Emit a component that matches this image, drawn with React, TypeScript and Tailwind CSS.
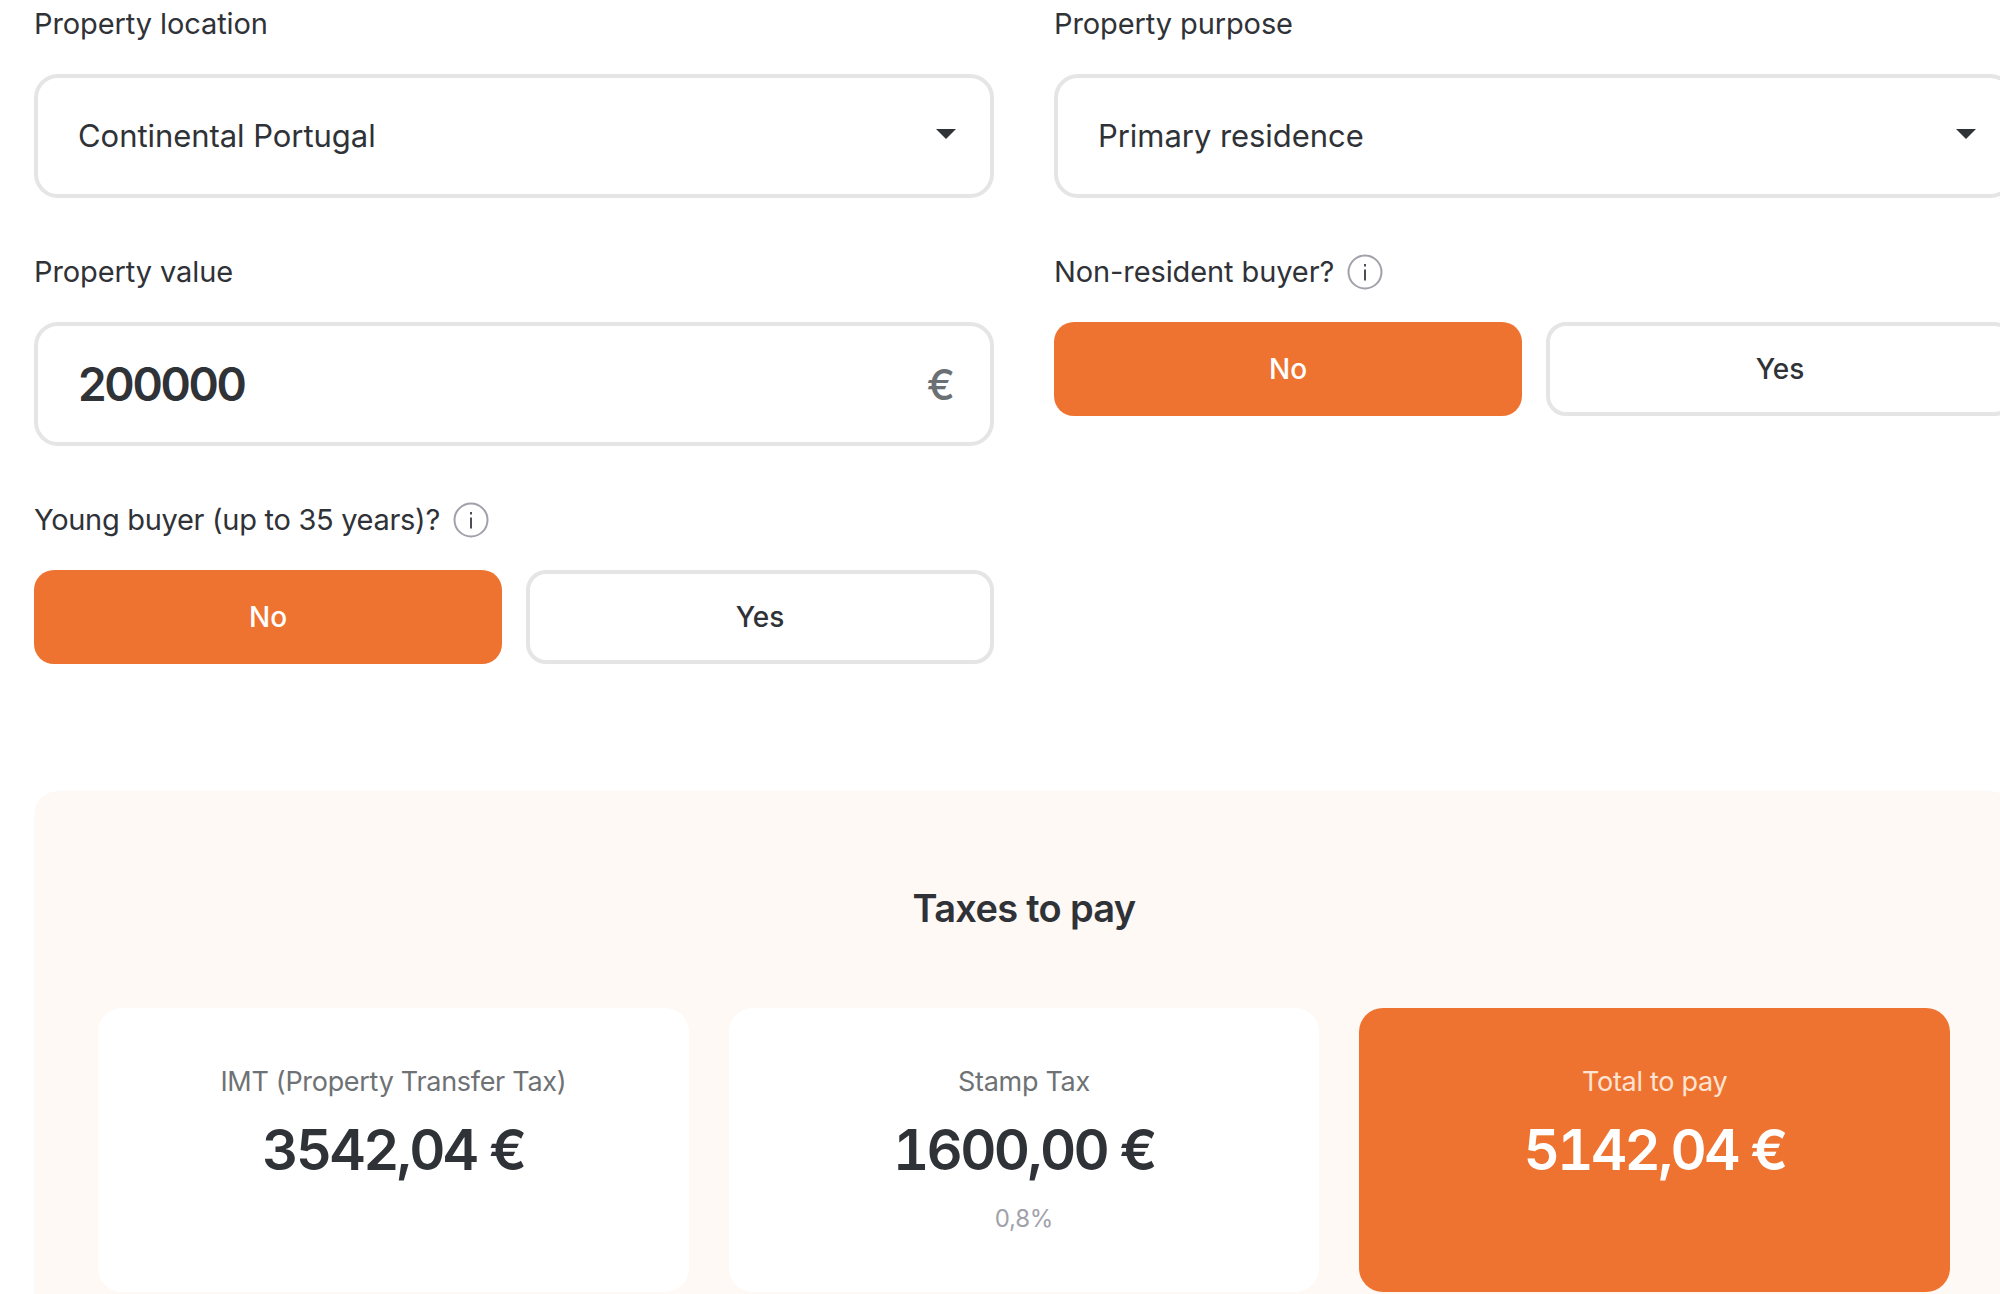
import { ReactNode } from 'react';

const font = { fontFamily: 'Inter, "Liberation Sans", sans-serif' };

function InfoIcon() {
  return (
    <svg width="36" height="36" viewBox="0 0 36 36" fill="none" className="shrink-0">
      <circle cx="18" cy="18" r="16.5" stroke="#a1a1aa" strokeWidth="2" />
      <rect x="17" y="15.5" width="2" height="11" fill="#4b4f55" />
      <rect x="17" y="10" width="2" height="2.5" fill="#4b4f55" />
    </svg>
  );
}

function Label({ children, info, tight }: { children: ReactNode; info?: boolean; tight?: boolean }) {
  return (
    <div className="h-[74px] flex items-start">
      <div className={`h-12 flex items-center gap-[13px] text-[29px] text-[#2f3237] ${tight ? 'tracking-[-0.3px]' : 'tracking-[-0.1px]'}`}>
        <span>{children}</span>
        {info && <InfoIcon />}
      </div>
    </div>
  );
}

function Select({ value }: { value: string }) {
  return (
    <div className="h-[124px] rounded-3xl border-4 border-[#e5e5e5] bg-white flex items-center justify-between pl-10 pr-[34px]">
      <span className="text-[31px] tracking-[-0.05px] text-[#2f3237]">{value}</span>
      <svg width="20" height="10" viewBox="0 0 20 10" className="mb-[4px]">
        <path d="M0 0H20L10 10Z" fill="#2f3237" />
      </svg>
    </div>
  );
}

function Toggle() {
  return (
    <div className="grid grid-cols-2 gap-[24px]">
      <button className="h-[94px] rounded-[20px] bg-[#ef7330] text-white text-[28px] font-medium">No</button>
      <button className="h-[94px] rounded-[20px] border-4 border-[#e5e5e5] bg-white text-[#2f3237] text-[28px] font-medium">Yes</button>
    </div>
  );
}

function Card({ title, amount, note, accent }: { title: string; amount: string; note?: string; accent?: boolean }) {
  return (
    <div className={`h-[284px] rounded-3xl flex flex-col items-center pt-[54px] ${accent ? 'bg-[#ef7330]' : 'bg-white'}`}>
      <div className={`h-10 flex items-center text-[27px] tracking-[-0.3px] ${accent ? 'text-[#ffe3d3]' : 'text-[#6f7275]'}`}>{title}</div>
      <div className={`mt-[13px] h-[70px] flex items-center text-[56px] font-semibold tabular-nums tracking-[-2.6px] ${accent ? 'text-white' : 'text-[#2f3237]'}`}>{amount}</div>
      {note && <div className="mt-[16px] h-9 flex items-center text-[24px] tracking-[-0.2px] text-[#a1a1aa]">{note}</div>}
    </div>
  );
}

export default function App() {
  return (
    <div className="w-[2000px] h-[1294px] overflow-hidden bg-white" style={font}>
      <div className="w-[1980px] ml-[34px]">
        <div className="grid grid-cols-[960px_960px] gap-x-[60px] gap-y-[50px]">
          <div>
            <Label>Property location</Label>
            <Select value="Continental Portugal" />
          </div>
          <div>
            <Label>Property purpose</Label>
            <Select value="Primary residence" />
          </div>
          <div>
            <Label>Property value</Label>
            <div className="h-[124px] rounded-3xl border-4 border-[#e5e5e5] bg-white flex items-center justify-between pl-10 pr-[35px]">
              <span className="text-[46px] font-semibold tracking-[-2.3px] text-[#2f3237]">200000</span>
              <span className="text-[42px] font-medium text-[#6b7075]">€</span>
            </div>
          </div>
          <div>
            <Label info>Non-resident buyer?</Label>
            <Toggle />
          </div>
          <div>
            <Label info tight>Young buyer (up to 35 years)?</Label>
            <Toggle />
          </div>
        </div>

        {/* Results */}
        <div className="mt-[127px] rounded-t-3xl bg-[#fff9f6] px-[64px] pt-[88px] pb-6">
          <h2 className="h-[58px] flex items-center justify-center text-[38px] font-semibold tracking-[-0.7px] text-[#2f3237]">Taxes to pay</h2>
          <div className="mt-[71px] grid grid-cols-3 gap-[40px]">
            <Card title="IMT (Property Transfer Tax)" amount="3542,04 €" />
            <Card title="Stamp Tax" amount="1600,00 €" note="0,8%" />
            <Card title="Total to pay" amount="5142,04 €" accent />
          </div>
        </div>
      </div>
    </div>
  );
}
